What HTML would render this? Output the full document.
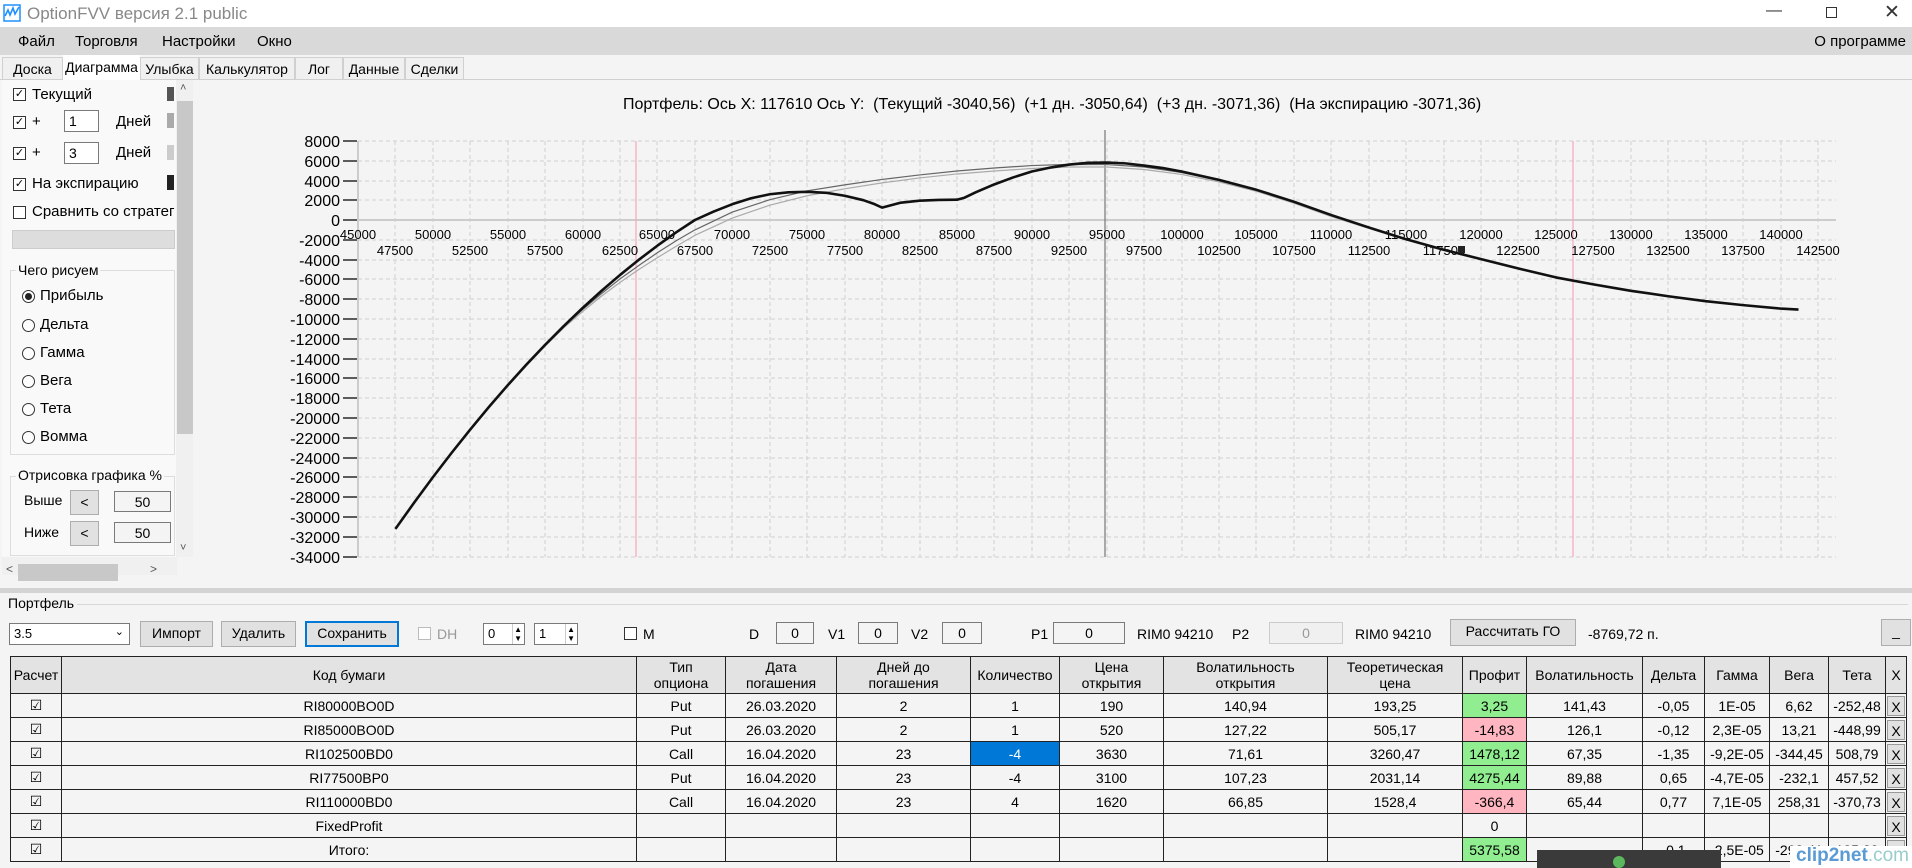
<!DOCTYPE html>
<html><head><meta charset="utf-8"><style>
*{box-sizing:border-box;margin:0;padding:0}
body{width:1912px;height:868px;overflow:hidden;background:#f4f4f4;font-family:"Liberation Sans",sans-serif;font-size:14px;color:#000;position:relative}
.a{position:absolute;white-space:nowrap}
.menu{top:27px;left:0;width:1912px;height:28px;background:#d9d9d9}
.tab{top:57px;height:22px;border:1px solid #d0d0d0;border-bottom:none;background:#f0f0f0;font-size:14px;padding:3px 0 0;text-align:center}
.cb{width:13px;height:13px;border:1px solid #333;background:#fff;font-size:11px;line-height:11px;text-align:center}
.rb{width:13px;height:13px;border:1px solid #333;border-radius:50%;background:#fff}
.inp{border:1px solid #7a7a7a;background:#fff;font-size:14px;padding:2px 4px}
.btn{border:1px solid #adadad;background:#e1e1e1;text-align:center;font-size:14px;padding-top:3px}
table{border-collapse:collapse;table-layout:fixed;position:absolute;left:10px;top:656px;width:1896px;font-size:14px}
td,th{border:1px solid #222;text-align:center;height:24px;padding:0;overflow:hidden;white-space:nowrap;background:#f4f4f4}
th{background:#e3e3e3;font-weight:normal;height:37px;line-height:16px}
.g{background:#90ee90}.p{background:#ffb6c1}.s{background:#0078d7;color:#fff}
.x{padding:0}.x div{margin:1px;border:1px solid #999;background:#e1e1e1;height:20px;line-height:20px}
</style></head><body>
<div class="a" style="left:0;top:0;width:1912px;height:27px;background:#fff"></div>
<svg class="a" style="left:3px;top:4px" width="18" height="18" viewBox="0 0 18 18"><rect x="1" y="1" width="16" height="16" fill="none" stroke="#1e90ff" stroke-width="1.5"/><path d="M2 12 L5 6 L7 11 L10 4 L12 10 L16 3" fill="none" stroke="#1e90ff" stroke-width="1.6"/></svg>
<div class="a" style="left:27px;top:4px;font-size:17px;color:#888">OptionFVV версия 2.1 public</div>
<div class="a" style="left:1766px;top:2px;font-size:16px;color:#333">&#8212;</div>
<div class="a" style="left:1826px;top:7px;width:11px;height:11px;border:1px solid #333"></div>
<div class="a" style="left:1884px;top:1px;font-size:19px;color:#333">&#10005;</div>
<div class="a menu"></div>
<div class="a" style="left:18px;top:33px;font-size:15px">Файл</div>
<div class="a" style="left:75px;top:33px;font-size:15px">Торговля</div>
<div class="a" style="left:162px;top:33px;font-size:15px">Настройки</div>
<div class="a" style="left:257px;top:33px;font-size:15px">Окно</div>
<div class="a" style="right:6px;top:33px;font-size:15px">О программе</div>
<div class="a tab" style="left:2px;width:61px">Доска</div>
<div class="a tab" style="left:140px;width:59px">Улыбка</div>
<div class="a tab" style="left:199px;width:96px">Калькулятор</div>
<div class="a tab" style="left:295px;width:48px">Лог</div>
<div class="a tab" style="left:343px;width:62px">Данные</div>
<div class="a tab" style="left:405px;width:59px">Сделки</div>
<div class="a" style="left:0;top:79px;width:1912px;height:1px;background:#d0d0d0"></div>
<div class="a tab" style="left:63px;width:77px;top:55px;height:25px;background:#fff;border-color:#fff">Диаграмма</div>
<div class="a" style="left:2px;top:80px;width:174px;height:490px;background:#f9f9f9"></div>
<div class="a cb" style="left:13px;top:88px">&#10003;</div><div class="a" style="left:32px;top:86px;font-size:15px">Текущий</div>
<div class="a" style="left:167px;top:87px;width:7px;height:14px;background:#555"></div>
<div class="a cb" style="left:13px;top:116px">&#10003;</div><div class="a" style="left:32px;top:113px;font-size:15px">+</div>
<div class="a inp" style="left:64px;top:110px;width:35px;height:22px">1</div><div class="a" style="left:116px;top:113px;font-size:15px">Дней</div>
<div class="a" style="left:167px;top:113px;width:7px;height:15px;background:#aaa"></div>
<div class="a cb" style="left:13px;top:147px">&#10003;</div><div class="a" style="left:32px;top:144px;font-size:15px">+</div>
<div class="a inp" style="left:64px;top:142px;width:35px;height:22px">3</div><div class="a" style="left:116px;top:144px;font-size:15px">Дней</div>
<div class="a" style="left:167px;top:145px;width:7px;height:15px;background:#ccc"></div>
<div class="a cb" style="left:13px;top:178px">&#10003;</div><div class="a" style="left:32px;top:175px;font-size:15px">На экспирацию</div>
<div class="a" style="left:167px;top:175px;width:7px;height:15px;background:#222"></div>
<div class="a cb" style="left:13px;top:206px"></div><div class="a" style="left:32px;top:203px;font-size:15px;width:143px;overflow:hidden">Сравнить со стратегией</div>
<div class="a" style="left:12px;top:230px;width:163px;height:19px;background:#ddd;border:1px solid #ccc"></div>
<div class="a" style="left:10px;top:270px;width:165px;height:185px;border:1px solid #ddd"></div>
<div class="a" style="left:16px;top:262px;font-size:14px;background:#f9f9f9;padding:0 2px">Чего рисуем</div>
<div class="a rb" style="left:22px;top:290px"></div><div class="a" style="left:25px;top:293px;width:7px;height:7px;border-radius:50%;background:#222"></div>
<div class="a" style="left:40px;top:287px;font-size:15px">Прибыль</div>
<div class="a rb" style="left:22px;top:319px"></div><div class="a" style="left:40px;top:316px;font-size:15px">Дельта</div>
<div class="a rb" style="left:22px;top:347px"></div><div class="a" style="left:40px;top:344px;font-size:15px">Гамма</div>
<div class="a rb" style="left:22px;top:375px"></div><div class="a" style="left:40px;top:372px;font-size:15px">Вега</div>
<div class="a rb" style="left:22px;top:403px"></div><div class="a" style="left:40px;top:400px;font-size:15px">Тета</div>
<div class="a rb" style="left:22px;top:431px"></div><div class="a" style="left:40px;top:428px;font-size:15px">Вомма</div>
<div class="a" style="left:10px;top:476px;width:165px;height:80px;border:1px solid #ddd"></div>
<div class="a" style="left:16px;top:467px;font-size:14px;background:#f9f9f9;padding:0 2px">Отрисовка графика %</div>
<div class="a" style="left:24px;top:492px;font-size:14px">Выше</div>
<div class="a btn" style="left:70px;top:490px;width:29px;height:25px">&lt;</div>
<div class="a inp" style="left:114px;top:491px;width:57px;height:21px;text-align:center;background:#f4f4f4">50</div>
<div class="a" style="left:24px;top:524px;font-size:14px">Ниже</div>
<div class="a btn" style="left:70px;top:521px;width:29px;height:25px">&lt;</div>
<div class="a inp" style="left:114px;top:522px;width:57px;height:21px;text-align:center;background:#f4f4f4">50</div>
<div class="a" style="left:176px;top:80px;width:17px;height:477px;background:#f0f0f0"></div>
<div class="a" style="left:177px;top:101px;width:16px;height:333px;background:#c8c8c8"></div>
<div class="a" style="left:180px;top:82px;font-size:11px;color:#555">&#708;</div>
<div class="a" style="left:180px;top:542px;font-size:11px;color:#555">&#709;</div>
<div class="a" style="left:2px;top:557px;width:175px;height:18px;background:#f0f0f0"></div>
<div class="a" style="left:18px;top:564px;width:100px;height:17px;background:#c8c8c8"></div>
<div class="a" style="left:6px;top:562px;font-size:12px;color:#555">&lt;</div>
<div class="a" style="left:150px;top:562px;font-size:12px;color:#555">&gt;</div>
<div class="a" style="left:623px;top:96px;font-size:16px">Портфель: Ось X: 117610 Ось Y:&nbsp; (Текущий -3040,56)&nbsp; (+1 дн. -3050,64)&nbsp; (+3 дн. -3071,36)&nbsp; (На экспирацию -3071,36)</div>
<svg class="a" style="left:0;top:0" width="1912" height="600" font-family="Liberation Sans, sans-serif">
<g stroke="#d0d0d0" stroke-dasharray="4,3" stroke-width="1">
<path d="M358 141H1836M358 161H1836M358 181H1836M358 200H1836M358 240H1836M358 260H1836M358 279H1836M358 299H1836M358 319H1836M358 339H1836M358 359H1836M358 378H1836M358 398H1836M358 418H1836M358 438H1836M358 458H1836M358 477H1836M358 497H1836M358 517H1836M358 537H1836M358 557H1836"/>
<path d="M395 141V557M433 141V557M470 141V557M508 141V557M545 141V557M583 141V557M620 141V557M657 141V557M695 141V557M732 141V557M770 141V557M807 141V557M845 141V557M882 141V557M920 141V557M957 141V557M994 141V557M1032 141V557M1069 141V557M1107 141V557M1144 141V557M1182 141V557M1219 141V557M1256 141V557M1294 141V557M1331 141V557M1369 141V557M1406 141V557M1444 141V557M1481 141V557M1518 141V557M1556 141V557M1593 141V557M1631 141V557M1668 141V557M1706 141V557M1743 141V557M1781 141V557M1818 141V557"/>
</g>
<path d="M358 220H1836" stroke="#ccc" stroke-width="2"/>
<path d="M358 141V557" stroke="#ccc" stroke-width="2"/>
<path d="M636 141V557M1573 141V557" stroke="#f7a8b8" stroke-width="1.2"/>
<path d="M1105 130V557" stroke="#777" stroke-width="1.2"/>
<g stroke="#000" stroke-width="1.3">
<path d="M343 141h14M343 161h14M343 181h14M343 200h14M343 220h14M343 240h14M343 260h14M343 279h14M343 299h14M343 319h14M343 339h14M343 359h14M343 378h14M343 398h14M343 418h14M343 438h14M343 458h14M343 477h14M343 497h14M343 517h14M343 537h14M343 557h14"/>
</g>
<g font-size="16" text-anchor="end">
<text x="340" y="147">8000</text><text x="340" y="167">6000</text><text x="340" y="187">4000</text><text x="340" y="206">2000</text><text x="340" y="226">0</text><text x="340" y="246">-2000</text><text x="340" y="266">-4000</text><text x="340" y="285">-6000</text><text x="340" y="305">-8000</text><text x="340" y="325">-10000</text><text x="340" y="345">-12000</text><text x="340" y="365">-14000</text><text x="340" y="384">-16000</text><text x="340" y="404">-18000</text><text x="340" y="424">-20000</text><text x="340" y="444">-22000</text><text x="340" y="464">-24000</text><text x="340" y="483">-26000</text><text x="340" y="503">-28000</text><text x="340" y="523">-30000</text><text x="340" y="543">-32000</text><text x="340" y="563">-34000</text>
</g>
<g font-size="13" text-anchor="middle">
<text x="358" y="239">45000</text><text x="433" y="239">50000</text><text x="508" y="239">55000</text><text x="583" y="239">60000</text><text x="657" y="239">65000</text><text x="732" y="239">70000</text><text x="807" y="239">75000</text><text x="882" y="239">80000</text><text x="957" y="239">85000</text><text x="1032" y="239">90000</text><text x="1107" y="239">95000</text><text x="1182" y="239">100000</text><text x="1256" y="239">105000</text><text x="1331" y="239">110000</text><text x="1406" y="239">115000</text><text x="1481" y="239">120000</text><text x="1556" y="239">125000</text><text x="1631" y="239">130000</text><text x="1706" y="239">135000</text><text x="1781" y="239">140000</text>
<text x="395" y="255">47500</text><text x="470" y="255">52500</text><text x="545" y="255">57500</text><text x="620" y="255">62500</text><text x="695" y="255">67500</text><text x="770" y="255">72500</text><text x="845" y="255">77500</text><text x="920" y="255">82500</text><text x="994" y="255">87500</text><text x="1069" y="255">92500</text><text x="1144" y="255">97500</text><text x="1219" y="255">102500</text><text x="1294" y="255">107500</text><text x="1369" y="255">112500</text><text x="1444" y="255">117500</text><text x="1518" y="255">122500</text><text x="1593" y="255">127500</text><text x="1668" y="255">132500</text><text x="1743" y="255">137500</text><text x="1818" y="255">142500</text>
</g>
<g transform="matrix(0.014974 0 0 -0.0099 -315.83 220)" fill="none" stroke-linejoin="round">
<polyline vector-effect="non-scaling-stroke" stroke="#aaa" stroke-width="1.2" points="47500,-31200 48750,-28600 50000,-26050 51250,-23600 52500,-21250 53750,-18980 55000,-16800 56250,-14720 57500,-12750 58750,-10880 60000,-9250 61250,-7700 62500,-6300 63750,-5000 65000,-3800 66250,-2650 67500,-1550 70000,200 72500,1500 75000,2450 77500,3150 80000,3750 82500,4250 85000,4650 87500,4950 90000,5200 92500,5350 95000,5350 97500,5100 100000,4600 102500,3850 105000,2900 107500,1700 110000,350 112500,-850 115000,-2000 117610,-3070 120000,-4000 122500,-4920 125000,-5820 127500,-6520 130000,-7170 132500,-7720 135000,-8220 137500,-8620 140000,-8970 141200,-9070"/>
<polyline vector-effect="non-scaling-stroke" stroke="#666" stroke-width="1.2" points="47500,-31200 48750,-28570 50000,-26000 51250,-23540 52500,-21180 53750,-18900 55000,-16720 56250,-14630 57500,-12650 58750,-10760 60000,-9050 61250,-7450 62500,-5950 63750,-4600 65000,-3300 66250,-2100 67500,-1000 70000,800 72500,2050 75000,2950 77500,3550 80000,4100 82500,4550 85000,4950 87500,5250 90000,5500 92500,5620 95000,5600 97500,5350 100000,4800 102500,4000 105000,3000 107500,1780 110000,430 112500,-800 115000,-1960 117610,-3050 120000,-3980 122500,-4910 125000,-5810 127500,-6510 130000,-7160 132500,-7710 135000,-8210 137500,-8610 140000,-8960 141200,-9060"/>
<polyline vector-effect="non-scaling-stroke" stroke="#111" stroke-width="2.6" points="47500,-31200 48750,-28547 50000,-25988 51250,-23522 52500,-21150 53750,-18872 55000,-16688 56250,-14597 57500,-12600 58750,-10697 60000,-8888 61250,-7172 62500,-5550 63750,-4022 65000,-2588 66250,-1247 67500,0 68750,850 70000,1600 71250,2200 72500,2600 73750,2800 75000,2850 76250,2750 77500,2450 78750,2000 79500,1600 80000,1250 80500,1450 81250,1750 82500,1950 83750,2030 85000,2050 85500,2250 86250,2800 87500,3600 88750,4300 90000,4900 91250,5300 92500,5600 93750,5780 95000,5800 96250,5720 97500,5500 98750,5250 100000,4900 102500,4050 105000,3050 107500,1850 110000,500 112500,-750 115000,-1950 117500,-3000 120000,-3950 122500,-4900 125000,-5800 127500,-6500 130000,-7150 132500,-7700 135000,-8200 137500,-8600 140000,-8950 141200,-9050"/>
</g>
<rect x="1458" y="246" width="7" height="7" fill="#222"/>
</svg>
<div class="a" style="left:0;top:586px;width:1912px;height:7px;background:#d3d3d3;border-top:2px solid #f4f4f4"></div>
<div class="a" style="left:8px;top:604px;width:1900px;height:1px;background:#d8d8d8"></div>
<div class="a" style="left:8px;top:595px;font-size:14px;background:#f4f4f4;padding-right:3px">Портфель</div>
<div class="a inp" style="left:9px;top:623px;width:121px;height:22px;font-size:13px;padding-top:2px">3.5<span style="position:absolute;right:5px;top:1px;font-size:11px">&#8964;</span></div>
<div class="a btn" style="left:140px;top:621px;width:73px;height:26px">Импорт</div>
<div class="a btn" style="left:221px;top:621px;width:75px;height:26px">Удалить</div>
<div class="a btn" style="left:305px;top:621px;width:94px;height:26px;border:2px solid #0078d7;padding-top:2px">Сохранить</div>
<div class="a cb" style="left:418px;top:627px;border-color:#bbb"></div><div class="a" style="left:437px;top:626px;color:#999;font-size:14px">DH</div>
<div class="a inp" style="left:483px;top:623px;width:42px;height:22px;font-size:13px;padding-top:2px">0<span style="position:absolute;right:1px;top:0;font-size:8px;line-height:9px;border-left:1px solid #ccc;padding:1px">▲<br>▼</span></div>
<div class="a inp" style="left:534px;top:623px;width:44px;height:22px;font-size:13px;padding-top:2px">1<span style="position:absolute;right:1px;top:0;font-size:8px;line-height:9px;border-left:1px solid #ccc;padding:1px">▲<br>▼</span></div>
<div class="a cb" style="left:624px;top:627px"></div><div class="a" style="left:643px;top:626px">M</div>
<div class="a" style="left:749px;top:626px">D</div><div class="a inp" style="left:776px;top:622px;width:38px;height:22px;text-align:center;background:#f4f4f4">0</div>
<div class="a" style="left:828px;top:626px">V1</div><div class="a inp" style="left:858px;top:622px;width:40px;height:22px;text-align:center;background:#f4f4f4">0</div>
<div class="a" style="left:911px;top:626px">V2</div><div class="a inp" style="left:942px;top:622px;width:40px;height:22px;text-align:center;background:#f4f4f4">0</div>
<div class="a" style="left:1031px;top:626px">P1</div><div class="a inp" style="left:1053px;top:622px;width:72px;height:22px;text-align:center;background:#f4f4f4">0</div>
<div class="a" style="left:1137px;top:626px">RIM0 94210</div>
<div class="a" style="left:1232px;top:626px">P2</div><div class="a inp" style="left:1269px;top:622px;width:74px;height:22px;text-align:center;background:#f0f0f0;border-color:#ccc;color:#999">0</div>
<div class="a" style="left:1355px;top:626px">RIM0 94210</div>
<div class="a btn" style="left:1450px;top:619px;width:126px;height:27px">Рассчитать ГО</div>
<div class="a" style="left:1588px;top:626px">-8769,72 п.</div>
<div class="a btn" style="left:1881px;top:619px;width:30px;height:27px">_</div>
<table>
<colgroup><col style="width:51px"><col style="width:575px"><col style="width:89px"><col style="width:111px"><col style="width:134px"><col style="width:89px"><col style="width:104px"><col style="width:164px"><col style="width:135px"><col style="width:64px"><col style="width:116px"><col style="width:62px"><col style="width:65px"><col style="width:59px"><col style="width:57px"><col style="width:21px"></colgroup>
<tr><th>Расчет</th><th>Код бумаги</th><th>Тип<br>опциона</th><th>Дата<br>погашения</th><th>Дней до<br>погашения</th><th>Количество</th><th>Цена<br>открытия</th><th>Волатильность<br>открытия</th><th>Теоретическая<br>цена</th><th>Профит</th><th>Волатильность</th><th>Дельта</th><th>Гамма</th><th>Вега</th><th>Тета</th><th>X</th></tr>
<tr><td>&#9745;</td><td>RI80000BO0D</td><td>Put</td><td>26.03.2020</td><td>2</td><td>1</td><td>190</td><td>140,94</td><td>193,25</td><td class="g">3,25</td><td>141,43</td><td>-0,05</td><td>1E-05</td><td>6,62</td><td>-252,48</td><td class="x"><div>X</div></td></tr>
<tr><td>&#9745;</td><td>RI85000BO0D</td><td>Put</td><td>26.03.2020</td><td>2</td><td>1</td><td>520</td><td>127,22</td><td>505,17</td><td class="p">-14,83</td><td>126,1</td><td>-0,12</td><td>2,3E-05</td><td>13,21</td><td>-448,99</td><td class="x"><div>X</div></td></tr>
<tr><td>&#9745;</td><td>RI102500BD0</td><td>Call</td><td>16.04.2020</td><td>23</td><td class="s">-4</td><td>3630</td><td>71,61</td><td>3260,47</td><td class="g">1478,12</td><td>67,35</td><td>-1,35</td><td>-9,2E-05</td><td>-344,45</td><td>508,79</td><td class="x"><div>X</div></td></tr>
<tr><td>&#9745;</td><td>RI77500BP0</td><td>Put</td><td>16.04.2020</td><td>23</td><td>-4</td><td>3100</td><td>107,23</td><td>2031,14</td><td class="g">4275,44</td><td>89,88</td><td>0,65</td><td>-4,7E-05</td><td>-232,1</td><td>457,52</td><td class="x"><div>X</div></td></tr>
<tr><td>&#9745;</td><td>RI110000BD0</td><td>Call</td><td>16.04.2020</td><td>23</td><td>4</td><td>1620</td><td>66,85</td><td>1528,4</td><td class="p">-366,4</td><td>65,44</td><td>0,77</td><td>7,1E-05</td><td>258,31</td><td>-370,73</td><td class="x"><div>X</div></td></tr>
<tr><td>&#9745;</td><td>FixedProfit</td><td></td><td></td><td></td><td></td><td></td><td></td><td></td><td>0</td><td></td><td></td><td></td><td></td><td></td><td class="x"><div>X</div></td></tr>
<tr><td>&#9745;</td><td>Итого:</td><td></td><td></td><td></td><td></td><td></td><td></td><td></td><td class="g">5375,58</td><td></td><td>-0,1</td><td>-2,5E-05</td><td>-293,41</td><td>185,23</td><td class="x"><div>X</div></td></tr>
</table>
<div class="a" style="left:1537px;top:850px;width:184px;height:18px;background:#3a3a3a"></div>
<div class="a" style="left:1613px;top:856px;width:12px;height:12px;border-radius:50%;background:#5cb85c"></div>
<div class="a" style="left:1790px;top:846px;width:122px;height:22px;background:#fff"></div>
<div class="a" style="left:1796px;top:845px;font-size:19px;color:#5a9bd5;font-weight:bold">clip2net<span style="font-weight:normal;color:#9cc">.com</span></div>
</body></html>
